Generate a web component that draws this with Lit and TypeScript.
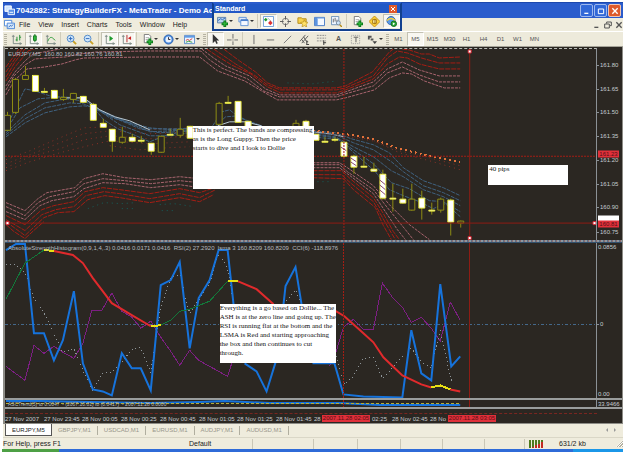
import { LitElement, html, css, svg, nothing } from "lit";
import { customElement, state } from "lit/decorators.js";
import { classMap } from "lit/directives/class-map.js";

/* ---------- plot geometry ---------- */
const LEFT = 5;
const WIDTH = 592;
const PRICE = { top: 49, height: 191 };
const OSC = { top: 243, height: 155 };
const STRIP = { top: 400, height: 7 };

const pctX = (x: number) => ((x - LEFT) / WIDTH) * 100;
const pctY = (y: number, pane: { top: number; height: number }) =>
  ((y - pane.top) / pane.height) * 100;

type Line = [kind: string, points: string];

const PRICE_LINES: Line[] = [
  // outer bands, upper left
  ["red", "6,67 14,56 19,49"],
  ["red", "6,72 14,60 22,49"],
  ["red", "6,77 15,62 25,49"],
  ["red", "6,81 15,67 28,51 34,49"],
  ["pink", "6,86 15,72 25,61 33,54 44,52 60,49"],
  ["pink", "6,90 14,76 25,65 35,59 48,58 66,57 80,54 96,52 147,51 201,51 210,60 222,68 248,79 264,91 280,97 337,97 346,94 374,86 388,73 403,67 420,75 440,82 461,82"],
  ["pink", "6,95 14,81 27,69 45,67 62,64 75,60 84,58 147,57 200,57 218,71 245,81 262,91 278,100 337,100 346,98 375,90 390,78 403,73 412,74 425,81 445,88 461,88"],
  // outer bands, upper middle and right
  ["pink", "202,49 214,58 226,66 250,76 266,89 280,95 337,95 346,92 374,82 388,69 403,62 420,70 440,76 461,76"],
  ["red", "207,49 216,55 232,65 251,74 268,87 281,93 337,93 346,90 374,79 388,64 400,57 408,58 420,64 440,69 461,69"],
  ["red", "214,49 236,64 256,76 268,85 281,90 337,90 346,88 374,76 388,58 398,51 408,53 422,58 440,63 461,63"],
  ["red", "224,49 240,61 256,72 268,83 280,88 337,88 346,86 373,72 390,52 394,49"],
  ["red", "403,49 410,50 422,54 430,54 440,58 461,57"],
  // outer bands, lower left
  ["pink", "6,203 25,211 38,199 47,193 75,188 84,179 103,174 125,178 151,180 180,177 200,179 216,174"],
  ["pink", "6,207 25,216 38,203 50,197 74,192 84,184 103,179 125,181 151,184 180,181 200,183 220,178"],
  ["pink", "6,212 25,220 40,206 52,201 74,197 84,189 103,183 125,184 151,188 180,185 200,188 216,182"],
  ["red", "6,216 25,225 42,210 54,206 74,202 85,192 103,188 120,190 150,194 180,189 200,193 218,187"],
  ["red", "6,220 25,231 42,215 56,210 74,207 86,196 104,192 120,194 150,199 180,194 200,198 216,190"],
  ["red", "6,222 25,236 44,218 58,213 74,212 88,200 105,196 120,198 150,203 180,198 200,202 214,195"],
  ["red", "6,225 14,232 25,239 36,229 44,222"],
  // outer bands, lower right
  ["pink", "313,163 340,163 348,168 374,186 390,205 410,225 430,240"],
  ["pink", "313,165 340,165 348,172 374,190 388,208 406,230 414,240"],
  ["pink", "313,168 340,168 348,174 374,194 386,212 398,230 406,240"],
  ["red", "313,171 342,171 352,180 374,198 384,214 394,232 400,240"],
  ["red", "313,175 342,175 352,184 374,202 382,216 390,230 396,240"],
  ["red", "313,178 344,179 354,190 376,208 384,226 392,240"],
  // inner dotted averages
  ["dots", "6,160 30,151 60,138 84,128 110,127 150,130 190,128"],
  ["dots", "6,164 30,155 60,143 84,134 110,131 150,134 190,132"],
  ["dots", "6,168 30,157 60,149 84,140 110,136 150,139 190,136"],
  ["dots", "6,171 30,162 60,153 84,147 110,141 150,144 190,142"],
  ["dots", "110,146 140,150 168,148 190,147"],
  ["teal", "88,209 104,203 122,204 136,203"],
  ["teal", "122,209 136,209"],
  ["teal", "160,205 174,204 194,207"],
  ["teal", "162,211 176,211"],
  ["teal", "288,83 312,84 338,81"],
  ["teal", "318,182 332,182"],
  // short averages
  ["blue", "6,128 25,89 35,91 50,96 66,98 84,98 94,107 112,118 150,128 172,130 193,128"],
  ["blue", "6,131 20,108 38,99 60,97 82,98 100,111 115,118 145,129 193,129"],
  ["blue", "6,133 25,115 45,103 66,99 84,101 100,110 125,121 150,132 193,130"],
  ["blue", "6,135 25,119 45,108 70,103 84,104 110,116 140,129 160,133 193,131"],
  ["blue", "6,137 25,123 45,113 70,107 84,106 94,107 120,125 150,136 172,136 193,132"],
  ["white", "66,98 84,98 100,110 115,117 130,121 150,130"],
  ["blue", "92,106 104,120 118,129 134,135 150,142 168,135 193,130"],
  ["blue", "213,126 222,112 230,110 240,118 262,126"],
  ["blue", "216,126 226,117 238,116 250,122 262,126"],
  ["white", "218,126 230,122 246,122 262,126"],
  ["white", "313,132 330,134 345,137"],
  ["blue", "313,131 336,133 352,139 374,145 390,153 404,168 424,181 444,188 461,196"],
  ["blue", "313,133 336,135 354,143 374,150 392,162 404,172 424,186 444,193 461,201"],
  ["blue", "313,134 336,137 354,147 374,157 392,171 404,177 424,190 444,197 461,206"],
  ["blue", "313,135 336,138 354,150 374,164 392,183 410,189 430,201 444,202 461,212"],
  ["blue", "313,137 340,140 358,156 376,172 390,190 404,196 420,202 434,209 446,204 461,217"],
  ["orange", "313,131 345,134 373,139 400,149 430,156 461,162"],
  ["dots", "313,133 345,136 373,141 400,151 430,158 461,166"],
  ["dots", "345,135 373,140 400,153 430,161 461,170"],
];

type Candle = [x: number, top: number, bottom: number, high: number, low: number, up?: boolean];
const CANDLES: Candle[] = [
  [7, 115, 131, 112, 131, true], [15, 79, 113, 78, 114, true], [25, 75, 80, 66, 80, true],
  [35, 75, 92, 75, 92], [44, 91, 93, 88, 93], [54, 90, 99, 90, 99],
  [63, 97, 100, 89, 101, true], [73, 93, 100, 93, 103, true], [83, 96, 103, 96, 103],
  [93, 104, 121, 103, 121], [103, 123, 128, 119, 128], [112, 129, 142, 129, 152],
  [122, 137, 143, 127, 144, true], [132, 137, 142, 134, 142], [141, 140, 142, 136, 143],
  [151, 143, 152, 143, 155], [161, 136, 153, 136, 153, true], [170, 134, 136, 129, 136],
  [180, 129, 136, 118, 138, true], [190, 126, 139, 126, 139], [219, 103, 125, 102, 125, true],
  [228, 102, 103, 96, 104], [238, 101, 123, 101, 123], [248, 121, 128, 121, 128],
  [296, 123, 130, 120, 130, true], [306, 121, 130, 120, 130], [316, 134, 141, 134, 141],
  [325, 141, 142, 137, 143], [335, 139, 141, 137, 142], [344, 142, 157, 142, 158],
  [354, 156, 168, 155, 174], [364, 166, 167, 157, 168], [374, 169, 172, 163, 172],
  [383, 174, 199, 170, 200], [393, 198, 200, 184, 212], [403, 199, 204, 189, 204],
  [412, 199, 211, 184, 211, true], [422, 198, 209, 191, 220], [432, 210, 212, 203, 215],
  [441, 199, 211, 198, 213, true], [451, 200, 223, 199, 236], [461, 221, 224, 221, 228, true],
];

const OSC_LINES: Line[] = [
  ["violet", "6,366 25,380 34,345 44,353 54,346 63,352 74,358 83,343 92,310 102,310 112,293 122,311 132,317 141,328 151,321 161,337 171,351 180,365 190,350 199,360 210,366 228,376 233,360 245,340"],
  ["violet", "330,366 335,357 344,327 354,319 364,329 374,329 383,283 393,297 403,307 412,322 422,317 432,328 441,341 451,302 461,320"],
  ["signal", "6,264 15,264 25,272 34,298 44,312 54,334 63,352 74,348 83,370 93,390 103,373 112,372 122,362 132,349 141,347 151,372 161,307 171,278 180,274 190,313 199,300 210,283 219,254 228,268 234,305"],
  ["signal", "284,304 296,290 302,304"],
  ["signal", "262,362 267,366 272,362"],
  ["signal", "335,348 345,384 354,376 364,358 374,357 383,378 393,368 400,359 412,348 422,361 432,368 441,330 452,380 456,375"],
  ["azure", "6,250 16,244 25,244 34,333 44,333 54,360 63,340 74,291 83,363 93,389 103,391 112,395 122,353 132,368 141,368 151,390 161,285 171,280 180,262 190,348 199,298 210,280 219,250 228,250 234,305"],
  ["azure", "245,363 257,371 267,391 276,362"],
  ["azure", "284,304 286,286 296,267 302,304"],
  ["azure", "313,363 335,363 344,394 364,396 403,397 412,330 422,373 432,380 441,284 452,366 461,356"],
  ["green", "6,299 25,263 44,250"],
  ["crimson", "54,251 73,255 83,263 93,278 112,303 132,315 151,326"],
  ["green", "161,325 171,320 180,311 190,309 210,301 228,281"],
  ["crimson", "238,281 257,289 274,304"],
  ["crimson", "333,309 345,316 364,333 374,342 384,357 403,375 422,384 432,387"],
  ["crimson", "451,389 461,391"],
  ["yellow", "44,250 54,251"],
  ["yellow", "151,326 161,325"],
  ["yellow", "228,281 238,281"],
  ["yellow", "432,387 441,385 451,389"],
];

const STRIP_LINES: Line[] = [
  ["azure", "6,401 40,401 90,402 150,403 200,402 225,401 270,403 340,403 380,405 461,405"],
  ["strip", "6,403 461,403"],
];

/* purple strokes across the long falling candles */
const HATCH = "M351 158l6 4M351 162l6 4M380 180l6 5M380 185l6 5M380 190l6 5M341 147l6 4";

const PRICE_LABELS: [string, number][] = [
  ["161.80", 66], ["161.65", 90], ["161.50", 113], ["161.35", 137],
  ["161.20", 161], ["161.05", 185], ["160.90", 208], ["160.75", 232],
];
const TIMES: [string, number][] = [
  ["27 Nov 2007", 5], ["27 Nov 23:45", 44], ["28 Nov 00:05", 82], ["28 Nov 00:25", 121],
  ["28 Nov 00:45", 160], ["28 Nov 01:05", 199], ["28 Nov 01:25", 237], ["28 Nov 01:45", 276],
  ["28", 314], ["02:25", 372], ["28 Nov 02:45", 392], ["28 No", 430],
];

/* ---------- icons, drawn on a 12 x 12 grid ---------- */
const page = svg`<path d="M2.5 .5h5l2 2v7h-7z" fill="#fff" stroke="#777"/><path d="M4 4h4M4 6h3" stroke="#aaa"/>`;
const plus = svg`<path d="M8.5 5v7M5 8.5h7" stroke="#0c7a1c" stroke-width="3"/><path d="M8.5 6v5M6 8.5h5" stroke="#35c23f"/>`;
const axes = svg`<path d="M2.500 1v9.500H12M1 2.500h3M10 9v3" stroke="#7d8a86" fill="none"/>`;
const lens = svg`<path d="M7.500 7.500l3.500 3.500" stroke="#c9a227" stroke-width="2"/><circle cx="5" cy="5" r="3.700" fill="#cfe6fb" stroke="#4d86c6"/>`;
const ICONS: Record<string, unknown> = {
  app: svg`<path d="M1 1h7v6H1z" fill="#cfe4ff" stroke="#fff"/><path d="M4.500 4.500h7v6h-7z" fill="#5d93e8" stroke="#fff"/><path d="M6 8h4" stroke="#fff"/>`,
  child: svg`<path d="M.500 1.500h8v6h-8z" fill="#fff" stroke="#4a86d8"/><path d="M3.500 4.500h8v6h-8z" fill="#d7e8fb" stroke="#4a86d8"/><path d="M5 9l2-2 1 1 2-2" stroke="#2b66b8" fill="none"/>`,
  bars: svg`${axes}<path d="M6.500 3v5M9.500 1v6M5 6.500h2M9.500 3.500H11" stroke="#1b8a2c"/>`,
  candles: svg`${axes}<path d="M7.500 0v9" stroke="#14751f"/><path d="M6 2h3v5H6z" fill="#2fbb3c" stroke="#14751f"/>`,
  line: svg`${axes}<path d="M3 8c2-5 4-6 8-1" stroke="#2a9a38" fill="none"/>`,
  zoomIn: svg`${lens}<path d="M3 5h4M5 3v4" stroke="#2b66b8"/>`,
  zoomOut: svg`${lens}<path d="M3 5h4" stroke="#2b66b8"/>`,
  scroll: svg`${axes}<path d="M6 2l4 3-4 3z" fill="#1d9a2c"/>`,
  shift: svg`${axes}<path d="M6.500 1v8" stroke="#b02020"/><path d="M11 2.500v4L7.500 4.500z" fill="#c22"/>`,
  addPage: svg`${page}${plus}`,
  clock: svg`<circle cx="6" cy="6" r="5" fill="#4d8fe0" stroke="#2a5fae"/><circle cx="6" cy="6" r="3.300" fill="#e8f2ff"/><path d="M6 3.500V6h2" stroke="#223" fill="none"/>`,
  template: svg`<path d="M.500 1.500h11v9H.500z" fill="#eef5ff" stroke="#5a8bc8"/><path d="M1 2h10v2H1z" fill="#5f9be6"/><path d="M2 7l2-1 2 1 3-2" stroke="#c33" fill="none"/><path d="M2 9l3-1 4 1" stroke="#2a9a38" fill="none"/>`,
  cursor: svg`<path d="M3 0v10l2.500-2.500L7 11l1.500-1L7 7h3z" fill="#333"/>`,
  cross: svg`<path d="M6.500 0v5M6.500 8v4M0 6.500h5M8 6.500h4" stroke="#666"/><path d="M6 6h1v1H6z" fill="#666"/>`,
  vline: svg`<path d="M6.500 1v10" stroke="#666"/>`,
  hline: svg`<path d="M2 6.500h8" stroke="#666"/>`,
  trend: svg`<path d="M2 10l8-8" stroke="#777"/>`,
  channel: svg`<path d="M1 8l6-7M3 10l7-8M5 3l3 5M3 6l3 4" stroke="#555"/><path d="M8.500 7v4.500M8 11.500h3M8.500 8.500H10" stroke="#333"/>`,
  fibo: svg`<path d="M1 1.500h10M1 4.500h10M1 7.500h10" stroke="#888" stroke-dasharray="2 1"/><path d="M8.500 7v5M8 9.500h3" stroke="#333"/>`,
  label: svg`<path d="M1.500 1.500h9v9h-9z" fill="none" stroke="#999" stroke-dasharray="1 1"/><path d="M4 3.500h5M6.500 4v5" stroke="#555"/>`,
  arrows: svg`<path d="M1 2h4v2H3v2H1zM4 5h3v2H4z" fill="#555"/><path d="M6 8h5l-2.500 3z" fill="#444"/>`,
  newChart: svg`<path d="M.500 1.500h9v6h-9z" fill="#b8d4f0" stroke="#5e7fa8"/><path d="M1 5l3-2 2 1 3-2" stroke="#2b66b8" fill="none"/>${plus}`,
  profiles: svg`<path d="M1 1.500h8v5H1z" fill="#ddeafc" stroke="#5f93d6"/><path d="M3 4.500h8v6H3z" fill="#f4f9ff" stroke="#5f93d6"/><path d="M3 4.500h8" stroke="#4a80cc" stroke-width="2"/>`,
  watch: svg`<path d="M.500 .500h11v11H.500z" fill="#fff" stroke="#6b9bd6"/><path d="M3 2l2 2-2 2-2-2z" fill="#1d9a2c"/><path d="M5 2l4 4" stroke="#9bb" /><path d="M8 5l2.500 2.500L8 10 5.500 7.500z" fill="#d33"/>`,
  target: svg`<circle cx="6" cy="6" r="3.500" fill="none" stroke="#777"/><path d="M6 0v4M6 8v4M0 6h4M8 6h4" stroke="#555"/>`,
  folder: svg`<path d="M1 2h4l1 1h4v5H1z" fill="#f6d24c" stroke="#b48a16"/><path d="M8 4l1 2.500 3 .500-2 2 .500 3L8 10.500 5.500 12 6 9 4 7l3-.500z" fill="#ffe36a" stroke="#b48a16" stroke-width=".7"/>`,
  terminal: svg`<path d="M.500 1.500h11v9H.500z" fill="#f4f9ff" stroke="#3f76c4"/><path d="M1 2h3v8H1z" fill="#5b94e0"/><path d="M4 2.500h7" stroke="#8cb6ee"/>`,
  tester: svg`<path d="M.500 .500h8v9h-8z" fill="#eef5ff" stroke="#6b8fb8"/><path d="M2.500 3v4M4.500 2v4M6.500 4v3" stroke="#666"/><circle cx="8" cy="7.500" r="2.200" fill="#cfe6fb" stroke="#789"/><path d="M9.500 9.500L12 12" stroke="#b48a16" stroke-width="1.500"/>`,
  editor: svg`<path d="M6 0l6 6-6 6-6-6z" fill="#fbd23c" stroke="#c48a10"/><path d="M4 4h4v4H4z" fill="#fff3b0" stroke="#a0700a"/><path d="M6.500 3v6" stroke="#a0700a"/>`,
  expert: svg`<circle cx="5.500" cy="5" r="4.500" fill="#5a9be8" stroke="#2f66b0"/><path d="M1 5c3-3 6-3 9 0" stroke="#f4d13c" stroke-width="1.500" fill="none"/><circle cx="8.500" cy="8.500" r="3" fill="#28a838" stroke="#0f6c1c"/><path d="M7.500 7l2.500 1.500-2.500 1.500z" fill="#fff"/>`,
};

const icon = (name: string) =>
  html`<svg class="icon" viewBox="0 0 12 12" aria-hidden="true">${ICONS[name]}</svg>`;

interface Tool { name: string; label: string; menu?: boolean; on?: boolean }
const CHART_TOOLS: Tool[][] = [
  [{ name: "bars", label: "Bar chart" }, { name: "candles", label: "Candlesticks", on: true }, { name: "line", label: "Line chart" }],
  [{ name: "zoomIn", label: "Zoom in" }, { name: "zoomOut", label: "Zoom out" }],
  [{ name: "scroll", label: "Auto scroll", on: true }, { name: "shift", label: "Chart shift", on: true }],
  [{ name: "addPage", label: "Indicators", menu: true }, { name: "clock", label: "Periods", menu: true }, { name: "template", label: "Templates", menu: true }],
];
const LINE_TOOLS: Tool[][] = [
  [{ name: "cursor", label: "Cursor", on: true }, { name: "cross", label: "Crosshair" }],
  [
    { name: "vline", label: "Vertical line" }, { name: "hline", label: "Horizontal line" },
    { name: "trend", label: "Trendline" }, { name: "channel", label: "Channel" },
    { name: "fibo", label: "Fibonacci" }, { name: "A", label: "Text" },
    { name: "label", label: "Text label" }, { name: "arrows", label: "Arrows", menu: true },
  ],
];
const STANDARD_TOOLS: Tool[][] = [
  [{ name: "newChart", label: "New chart", menu: true }, { name: "profiles", label: "Profiles", menu: true }],
  [
    { name: "watch", label: "Market watch", on: true }, { name: "target", label: "Data window" },
    { name: "folder", label: "Navigator" }, { name: "terminal", label: "Terminal" },
    { name: "tester", label: "Strategy tester" },
  ],
  [{ name: "addPage", label: "New order" }, { name: "editor", label: "MetaEditor" }, { name: "expert", label: "Expert advisors", on: true }],
];

const FRAMES = ["M1", "M5", "M15", "M30", "H1", "H4", "D1", "W1", "MN"];
const MENUS = ["File", "View", "Insert", "Charts", "Tools", "Window", "Help"];
const TABS = ["EURJPY,M5", "GBPJPY,M1", "USDCAD,M1", "EURUSD,M1", "AUDJPY,M1", "AUDUSD,M1"];

const toolStyles = css`
  button { font: inherit; color: inherit; background: none; border: 0; margin: 0; padding: 0; }
  .icon { display: block; width: 11px; height: 11px; flex: none; }
  .group { display: flex; align-items: center; }
  .group + .group { border-left: 1px solid #cfccba; margin-left: 1px; padding-left: 2px; }
  .tool {
    display: flex; align-items: center; justify-content: center; gap: 1px;
    width: 17px; height: 14px; box-sizing: border-box; border: 1px solid transparent;
  }
  .tool.menu { width: 21px; }
  .tool.on { background: #f8f7f1; border-color: #c3c1b2 #fff #fff #c3c1b2; }
  .caret { border: 2px solid transparent; border-top-color: #333; border-bottom: 0; }
`;

@customElement("tool-strip")
class ToolStrip extends LitElement {
  static properties = { groups: { attribute: false } };
  declare groups: Tool[][];
  static styles = [toolStyles, css`:host { display: flex; align-items: center; } .glyph { font-weight: bold; color: #555; }`];
  render() {
    return this.groups.map((group) => html`<div class="group">${group.map((t) => html`
      <button class=${classMap({ tool: true, menu: !!t.menu, on: !!t.on })} aria-label=${t.label}>
        ${t.name === "A" ? html`<span class="glyph">A</span>` : icon(t.name)}
        ${t.menu ? html`<span class="caret"></span>` : nothing}
      </button>`)}</div>`);
  }
}

@customElement("chart-window")
class ChartWindow extends LitElement {
  static styles = css`
    :host {
      display: grid; min-height: 0; overflow: hidden;
      grid-template-columns: minmax(0, 1fr) 25px;
      grid-template-rows: minmax(0, 191fr) 3px minmax(0, 155fr) 2px 7px 2px 14px;
      background: #2b2722; color: #c6cbd0; font-size: 6px; line-height: 8px;
      border: solid #8d8c86; border-width: 0 1px 0 2px; padding-top: 1px;
    }
    .pane { position: relative; min-height: 0; border-right: 1px solid #8b9196; }
    .price { border-top: 1px dashed #b9bcb8; box-sizing: border-box; }
    .plot { position: absolute; inset: 0; width: 100%; height: 100%; display: block; shape-rendering: crispEdges; }
    .plot * { vector-effect: non-scaling-stroke; }
    polyline { fill: none; stroke-width: 1; }
    .red { stroke: #a51d14; stroke-dasharray: 5 1; }
    .pink { stroke: #a8646e; stroke-dasharray: 3 1; }
    .dots { stroke: #8c3026; stroke-dasharray: 1 4; }
    .teal { stroke: #14605c; stroke-dasharray: 1 4; }
    .blue { stroke: #3f617f; stroke-dasharray: 4 1; }
    .white { stroke: #b8c8d2; }
    .orange { stroke: #e0713a; stroke-width: 2; stroke-dasharray: 2 3; }
    .violet { stroke: #7c1f82; }
    .signal { stroke: #8d9498; stroke-dasharray: 1 3; }
    .azure { stroke: #1673dc; stroke-width: 2; shape-rendering: geometricPrecision; }
    .green { stroke: #12793a; stroke-width: 1; }
    .crimson { stroke: #e02a2c; stroke-width: 2; shape-rendering: geometricPrecision; }
    .yellow { stroke: #e8e014; stroke-width: 2; }
    .strip { stroke: #b5ac35; stroke-dasharray: 3 2; }
    .wick { stroke: #8e8c14; }
    .up { fill: #2b2722; stroke: #8e8c14; }
    .down { fill: #fff; stroke: #e6e640; }
    .hatch { stroke: #8a4a70; }
    .level { stroke: #8e1c14; }
    .dotted { stroke: #a51d14; stroke-dasharray: 2 1; }
    .zero { stroke: #44688a; stroke-dasharray: 3 2 1 2; }
    .handle { fill: #fff; stroke: #d22b36; }
    .split { grid-column: 1 / -1; }
    .band { background: repeating-linear-gradient(90deg, #8e979d 0 2px, #5b6f88 2px 3px, #8d6a6c 3px 4px); border-bottom: 1px solid #33506c; box-sizing: border-box; }
    .bar { background: #9a9d9d; }
    .caption { position: absolute; top: 1px; left: 3px; white-space: pre; color: #b4bbc0; }
    .strip-caption { top: 2px; font-size: 5px; line-height: 5px; }
    .axis { position: relative; min-height: 0; }
    .tick { position: absolute; left: 3px; transform: translateY(-50%); }
    .tick::before { content: ""; position: absolute; left: -4px; top: 4px; width: 3px; height: 1px; background: #8b9196; }
    .tag { position: absolute; left: 1px; width: 21px; height: 7px; line-height: 7px; transform: translateY(-50%); background: #e0303a; color: #501016; text-align: center; }
    .tag.bid { background: #fff; height: 11px; }
    .edge { position: absolute; left: 1px; }
    .first { top: 0; }
    .last { bottom: 0; }
    .note {
      position: absolute; box-sizing: border-box; margin: 0; background: #fff; color: #111;
      font: 7px/9px "Liberation Serif", serif; white-space: nowrap;
    }
    .compress { width: 121px; height: 63px; }
    .pips { width: 80px; height: 20px; padding-left: 1px; }
    .dollie { width: 116px; height: 59px; }
    .times { position: relative; grid-column: 1 / -1; border-top: 1px solid #2b2722; box-sizing: border-box; }
    .times::before { content: ""; position: absolute; left: 0; right: 25px; top: 3px; border-top: 1px dashed #7a2620; }
    .time { position: absolute; top: 5px; white-space: nowrap; }
    .cursor-time { background: #e0303a; color: #5c0d13; height: 7px; line-height: 7px; width: 48px; text-align: center; overflow: hidden; }
  `;

  private lines(set: Line[]) {
    return set.map(([kind, points]) => svg`<polyline class=${kind} points=${points}></polyline>`);
  }

  private cursors(top: number, height: number) {
    return svg`
      <path class="dotted" d="M344.5 ${top}v${height}"></path>
      <path class="level" d="M470.5 ${top}v${height}"></path>`;
  }

  private canvas(pane: { top: number; height: number }, body: unknown) {
    return html`<svg class="plot" viewBox="${LEFT} ${pane.top} ${WIDTH} ${pane.height}" preserveAspectRatio="none" aria-hidden="true">${body}</svg>`;
  }

  private note(kind: string, x: number, y: number, pane: typeof PRICE, text: unknown) {
    return html`<p class="note ${kind}" style="left:${pctX(x)}%;top:${pctY(y, pane)}%">${text}</p>`;
  }

  render() {
    const handles = [[470, 51], [470, 238], [7, 223], [595, 223]];
    return html`
      <div class="pane price">
        ${this.canvas(PRICE, svg`
          ${this.lines(PRICE_LINES)}
          <path class="dotted" d="M5 156.5H597"></path>
          ${CANDLES.map(([x, top, bottom, high, low, up]) => svg`
            <path class="wick" d="M${x + 0.5} ${high}V${low}"></path>
            <rect class=${up ? "up" : "down"} x=${x - 2.5} y=${top + 0.5} width="6" height=${Math.max(bottom - top - 1, 1)}></rect>`)}
          <path class="hatch" d=${HATCH}></path>
          <path class="level" d="M5 223.5H597"></path>
          ${this.cursors(49, 191)}
          ${handles.map(([x, y]) => svg`<rect class="handle" x=${x - 1} y=${y - 1} width="3" height="3"></rect>`)}`)}
        <span class="caption">EURJPY,M5  160.80 160.82 160.76 160.81</span>
        ${this.note("compress", 193, 126, PRICE, html`This is perfect. The bands are compressing<br />as is the Long Guppy. Then the price<br />starts to dive and I look to Dollie`)}
        ${this.note("pips", 489, 165, PRICE, "40 pips")}
      </div>
      <div class="axis">
        ${PRICE_LABELS.map(([text, y]) => html`<span class="tick" style="top:${pctY(y, PRICE)}%">${text}</span>`)}
        <span class="tag" style="top:${pctY(155, PRICE)}%">161.23</span>
        <span class="tag bid" style="top:${pctY(222, PRICE)}%"></span>
        <span class="tag" style="top:${pctY(224, PRICE)}%">160.81</span>
      </div>
      <div class="split band"></div>
      <div class="pane">
        ${this.canvas(OSC, svg`
          <path class="zero" d="M5 324.5H597"></path>
          ${this.lines(OSC_LINES)}
          ${this.cursors(243, 155)}`)}
        <span class="caption">AbsoluteStrengthHistogram(0,9,1,4,.3) 0.0416 0.0171 0.0416  RSI(2) 27.2920  lsma 3 160.8209 160.8209  CCI(6) -118.8976</span>
        ${this.note("dollie", 220, 304, OSC, html`Everything is a go based on Dollie... The<br />ASH is at the zero line and going up. The<br />RSI is running flat at the bottom and the<br />LSMA is Red and starting approaching<br />the box and then continues to cut<br />through.`)}
      </div>
      <div class="axis">
        <span class="edge first">0.0856</span>
        <span class="tick" style="top:${pctY(324, OSC)}%">0</span>
        <span class="edge last">0.00</span>
      </div>
      <div class="split bar"></div>
      <div class="pane">
        ${this.canvas(STRIP, svg`${this.lines(STRIP_LINES)}${this.cursors(400, 7)}`)}
        <span class="caption strip-caption">ASCTrend(3) to 0.0047  - (2007.10.01) to (0.0417)  - 2007.11.28 0.0000</span>
      </div>
      <div class="axis"><span class="edge first">33.9466</span></div>
      <div class="split bar"></div>
      <div class="times">
        ${TIMES.map(([text, x]) => html`<span class="time" style="left:${((x - LEFT) / (WIDTH + 25)) * 100}%">${text}</span>`)}
        <span class="time cursor-time" style="left:${((322 - LEFT) / (WIDTH + 25)) * 100}%">2007.11.28 02:05</span>
        <span class="time cursor-time" style="left:${((448 - LEFT) / (WIDTH + 25)) * 100}%">2007.11.28 03:05</span>
      </div>`;
  }
}

@customElement("app-root")
class AppRoot extends LitElement {
  @state() private tab = "EURJPY,M5";
  @state() private frame = "M5";

  static styles = [toolStyles, css`
    :host {
      display: grid; box-sizing: border-box; position: relative;
      height: 100vh; padding: 2px 2px 0 3px;
      grid-template-rows: 16px 13px 16px minmax(0, 1fr) 14px 12px 3px;
      grid-template-columns: minmax(0, 1fr);
      background: #fff; color: #222;
      font: 7px/10px "Liberation Sans", Arial, sans-serif;
    }
    .title { display: flex; align-items: center; gap: 1px; padding: 0 2px 0 1px; background: #2a5ccc; border-top: 1px solid #1c48ae; box-sizing: border-box; color: #fff; }
    .title h1 { flex: 1; margin: 0; font-size: 8px; line-height: 12px; font-weight: bold; white-space: nowrap; overflow: hidden; }
    .sys { display: flex; gap: 1px; }
    .sys .icon, .child .icon { width: 8px; height: 8px; }
    .sys button { width: 13px; height: 13px; display: grid; place-items: center; box-sizing: border-box; border: 1px solid #9db8ee; border-radius: 2px; background: #3168d8; }
    .sys .close { background: #dd5a2b; border-color: #f0c4b0; }
    .menubar { display: flex; align-items: center; background: #efecdd; padding: 0 0 0 1px; }
    .menubar nav { display: flex; flex: 1; }
    .menubar nav button { padding: 0 4px; }
    .child { display: flex; gap: 3px; color: #555; }
    .child button { width: 8px; height: 10px; display: grid; place-items: center; }
    .toolbar { display: flex; align-items: center; background: #edeadb; border-top: 1px solid #fff; border-bottom: 1px solid #a5a398; box-sizing: border-box; }
    .grip { width: 3px; height: 11px; margin: 0 1px; background: repeating-linear-gradient(#b5b2a2 0 1px, transparent 1px 2px); }
    .frames { display: flex; color: #555; font-size: 6px; }
    .tabs { display: flex; align-items: flex-start; background: #efecdd; padding-left: 2px; font-size: 6px; border-top: 1px solid #8d8c86; box-sizing: border-box; color: #98968a; }
    .tabs button { height: 9px; margin-top: 2px; padding: 0 6px; line-height: 9px; border-right: 1px solid #b0ae9f; }
    .tabs .current { height: 12px; margin-top: 0; line-height: 12px; background: #fff; color: #222; border: 1px solid #555; border-top: 0; }
    .scrollers { margin-left: auto; display: flex; gap: 6px; padding: 4px 5px 0 0; }
    .left, .right { border: 2px solid transparent; }
    .left { border-right-color: #999; }
    .right { border-left-color: #999; }
    .status { display: grid; grid-template-columns: 186fr 63fr 61fr 44fr 43fr 42fr 42fr 40fr 99fr; align-items: center; background: #efecdd; border-top: 1px solid #dad7c7; box-sizing: border-box; }
    .status > span { height: 10px; white-space: nowrap; }
    .status > span:nth-child(n + 3) { border-left: 1px solid #cac7b6; }
    .status .traffic { display: flex; align-items: center; gap: 16px; padding-left: 4px; }
    .meter { display: block; width: 14px; height: 8px; }
    .size-grip { display: block; width: 7px; height: 7px; margin: 0 0 0 auto; background: repeating-linear-gradient(135deg, #fff 0 1px, #b5b2a1 1px 2px); clip-path: polygon(100% 0, 100% 100%, 0 100%); }
    .taskbar { margin-left: -1px; background: linear-gradient(90deg, #4da045 0 57px, #2f6bd8 57px 92%, #1b97e8 92%); }
    .floating { position: absolute; top: 2px; left: 212px; width: 190px; height: 29px; box-sizing: border-box; border: 2px solid #12408f; border-top-color: #2a5ccc; background: #2158c6; }
    .floating header { display: flex; align-items: center; justify-content: space-between; height: 9px; padding: 0 3px 0 1px; color: #fff; font-weight: bold; line-height: 9px; }
    .floating header button { display: grid; place-items: center; width: 8px; height: 8px; background: #e0592c; }
    .floating header .icon { width: 6px; height: 6px; }
    .floating .body { display: flex; height: 16px; background: #efecdd; }
  `];

  render() {
    const min = svg`<path d="M2 9.500h6" stroke="currentColor" stroke-width="2"/>`;
    const max = svg`<path d="M2 3h8v7H2z" fill="none" stroke="currentColor" stroke-width="1.500"/>`;
    const restore = svg`<path d="M4 4V1.500h7V7H9M1 4.500h7v6H1z" fill="none" stroke="currentColor" stroke-width="1.500"/>`;
    const close = svg`<path d="M2 2l8 8M10 2l-8 8" stroke="currentColor" stroke-width="2"/>`;
    const sys = (cls: string, label: string, mark: unknown) =>
      html`<button class=${cls} aria-label=${label}><svg class="icon" viewBox="0 0 12 12">${mark}</svg></button>`;
    return html`
      <header class="title">
        ${icon("app")}
        <h1>7042882: StrategyBuilderFX - MetaTrader - Demo Ac</h1>
        <div class="sys">${sys("", "Minimize", min)}${sys("", "Maximize", max)}${sys("close", "Close", close)}</div>
      </header>
      <div class="menubar">
        ${icon("child")}
        <nav aria-label="Main menu">${MENUS.map((m) => html`<button>${m}</button>`)}</nav>
        <div class="child">${sys("", "Minimize chart", min)}${sys("", "Restore chart", restore)}${sys("", "Close chart", close)}</div>
      </div>
      <div class="toolbar">
        <span class="grip"></span>
        <tool-strip .groups=${CHART_TOOLS}></tool-strip>
        <span class="grip"></span>
        <tool-strip .groups=${LINE_TOOLS}></tool-strip>
        <span class="grip"></span>
        <div class="frames">${FRAMES.map((f) => html`
          <button class=${classMap({ tool: true, on: f === this.frame })} @click=${() => (this.frame = f)}>${f}</button>`)}</div>
      </div>
      <chart-window></chart-window>
      <div class="tabs">
        ${TABS.map((t) => html`<button class=${classMap({ current: t === this.tab })} @click=${() => (this.tab = t)}>${t}</button>`)}
        <div class="scrollers"><span class="left"></span><span class="right"></span></div>
      </div>
      <footer class="status">
        <span>For Help, press F1</span><span>Default</span>
        <span></span><span></span><span></span><span></span><span></span><span></span>
        <span class="traffic">
          <svg class="meter" viewBox="0 0 14 8" aria-hidden="true">
            <path d="M1 0v8M4 0v8M7 0v8M10 0v8M13 0v8" stroke="#4f7a1c" stroke-width="2"/>
            <path d="M4 7v1M7 5v3M10 4v4M13 2v6" stroke="#c22a22" stroke-width="2"/>
          </svg>
          631/2 kb
          <i class="size-grip"></i>
        </span>
      </footer>
      <div class="taskbar"></div>
      <section class="floating" aria-label="Standard toolbar">
        <header>Standard ${sys("", "Close toolbar", close)}</header>
        <div class="body"><tool-strip .groups=${STANDARD_TOOLS}></tool-strip></div>
      </section>`;
  }
}
